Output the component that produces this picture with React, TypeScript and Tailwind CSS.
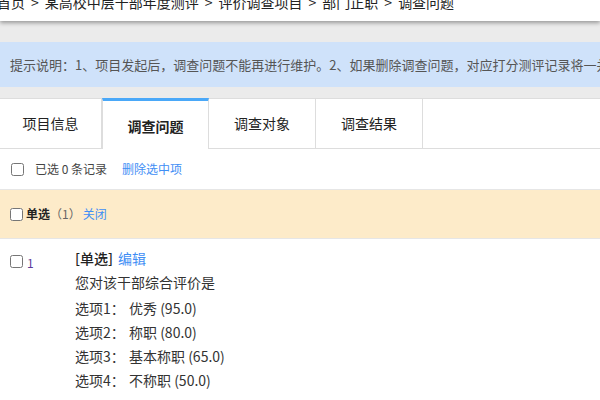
import React from "react";

const font = "font-['Microsoft_YaHei','Noto_Sans_CJK_SC',sans-serif]";

function Cb() {
  return <input type="checkbox" className="m-0 w-[13px] h-[13px] shrink-0" readOnly />;
}

export default function App() {
  const tabs = ["项目信息", "调查问题", "调查对象", "调查结果"];
  const crumbs = ["首页", "某高校中层干部年度测评", "评价调查项目", "部门正职", "调查问题"];
  const options = [
    ["选项1：", "优秀 (95.0)"],
    ["选项2：", "称职 (80.0)"],
    ["选项3：", "基本称职 (65.0)"],
    ["选项4：", "不称职 (50.0)"],
  ];
  return (
    <div className={`w-[600px] h-[400px] overflow-hidden bg-white text-[#333] ${font}`}>
      <div className="relative z-10 h-[21px] bg-white shadow-[0_2px_4px_rgba(0,0,0,0.35)]">
        <div className="h-[21px] overflow-hidden">
          <div className="-mt-[9px] -ml-[3px] flex whitespace-nowrap text-[14px] leading-[22px] text-[#222]">
            {crumbs.map((c, i) => (
              <React.Fragment key={c}>
                {i > 0 && <span className="mx-[6px]">&gt;</span>}
                <span>{c}</span>
              </React.Fragment>
            ))}
          </div>
        </div>
      </div>
      <div className="bg-[#ebebeb] pt-[21px] pb-[11px]">
        <div className="h-[45px] bg-[#cfe2fa] flex items-center pl-[10px] whitespace-nowrap overflow-hidden text-[13px] text-[#555]">
          提示说明：1、项目发起后，调查问题不能再进行维护。2、如果删除调查问题，对应打分测评记录将一并删除。
        </div>
      </div>
      <div className="flex h-[51px] bg-white">
        {tabs.map((t, i) =>
          i === 1 ? (
            <div
              key={t}
              className="w-[107px] border-t-[3px] border-t-[#4aa8f8] border-x border-x-[#ddd] flex items-center justify-center text-[14px] font-bold text-[#222] pt-[2px]"
            >
              {t}
            </div>
          ) : (
            <div
              key={t}
              className={`${i === 0 ? "w-[102px]" : "w-[107px]"} border-t border-b border-r border-[#ddd] flex items-center justify-center text-[14px] text-[#222]`}
            >
              {t}
            </div>
          )
        )}
        <div className="flex-1 border-t border-b border-[#ddd]" />
      </div>
      <div className="h-[40px] flex items-center pl-[11px] text-[12px] text-[#444]">
        <Cb />
        <span className="ml-[11px]">已选 0 条记录</span>
        <span className="ml-[15px] text-[#3f8ef5]">删除选中项</span>
      </div>
      <div className="h-[50px] bg-[#fdebc9] border-y border-[#e6e6e6] flex items-center pl-[10px] text-[12px]">
        <Cb />
        <span className="ml-[3px] font-bold text-[#222]">单选</span>
        <span className="text-[#666]">（1）</span>
        <span className="ml-[2px] text-[#3f8ef5]">关闭</span>
      </div>
      <div className="flex pt-[16px] pl-[10px]">
        <div className="w-[65px] flex items-start">
          <div className="flex items-center h-[13px]">
            <Cb />
            <span className="ml-[4px] text-[12px] text-[#5b3a9a] mt-[3px]">1</span>
          </div>
        </div>
        <div className="text-[14px] text-[#333]">
          <div className="-mt-[9px] leading-[24px]">
            <span className="font-medium text-[#222]">[单选]</span>
            <span className="ml-[5px] text-[#3f8ef5]">编辑</span>
          </div>
          <div className="leading-[24px]">您对该干部综合评价是</div>
          <div className="mt-[2px]">
            {options.map(([a, b]) => (
              <div key={a} className="flex leading-[24px]">
                <span className="w-[54px]">{a}</span>
                <span>{b}</span>
              </div>
            ))}
          </div>
        </div>
      </div>
    </div>
  );
}
